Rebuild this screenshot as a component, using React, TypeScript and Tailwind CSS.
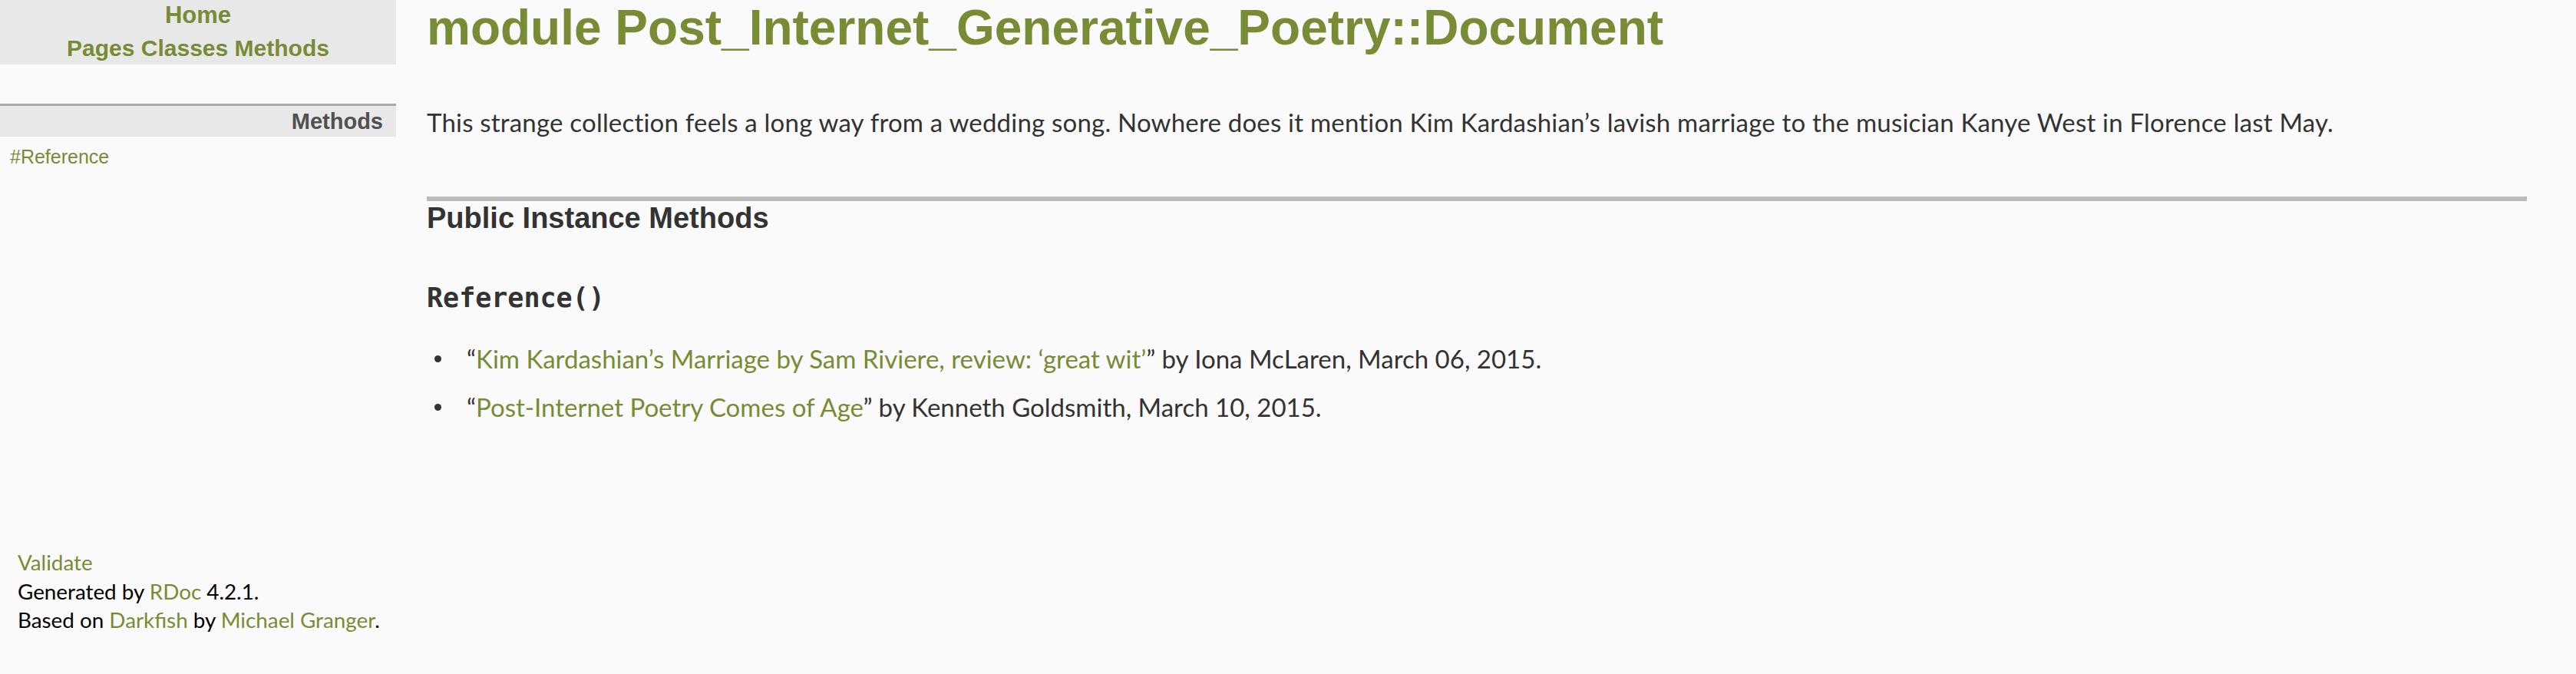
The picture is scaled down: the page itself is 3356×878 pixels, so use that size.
import React from "react";

const green = "text-[#778c35]";

export default function App() {
  return (
    <div className="flex min-h-screen w-full bg-[#fafafa] text-[#333]">
      {/* Sidebar */}
      <aside className="flex w-[516px] shrink-0 flex-col">
        <div className="bg-[#e8e8e8] pb-[1px] text-center font-['Liberation_Sans',Arial,sans-serif] font-bold">
          <div className={`text-[31px] leading-[39px] ${green}`}>Home</div>
          <div className={`mt-[4px] text-[30px] leading-[40px] ${green}`}>
            <span>Pages</span> <span>Classes</span> <span>Methods</span>
          </div>
        </div>

        <div className="mt-[51px] border-t-[3px] border-[#aaaaaa]">
          <h3 className="bg-[#e8e8e8] pr-[17px] text-right font-['Liberation_Sans',Arial,sans-serif] text-[29px] font-bold leading-[40px] text-[#505050]">
            Methods
          </h3>
          <div className={`mt-[10px] pl-[13px] font-['Liberation_Sans',Arial,sans-serif] text-[25px] leading-[32px] ${green}`}>
            #Reference
          </div>
        </div>

        <div className="mt-[494px] pl-[23px] font-['Lato',sans-serif] text-[27.8px] leading-[37.5px] text-black">
          <div className={green}>Validate</div>
          <div>
            Generated by <span className={green}>RDoc</span> 4.2.1.
          </div>
          <div>
            Based on <span className={green}>Darkfish</span> by{" "}
            <span className={green}>Michael Granger</span>.
          </div>
        </div>
      </aside>

      {/* Main */}
      <main className="ml-[40px] mr-[64px] flex-1">
        <h1 className={`font-['Liberation_Sans',Arial,sans-serif] text-[64px] font-bold leading-[72px] ${green}`}>
          module Post_Internet_Generative_Poetry::Document
        </h1>

        <p className="mt-[67px] font-['Lato',sans-serif] text-[33px] leading-[40px] tracking-[0.2px] text-[#333]">
          This strange collection feels a long way from a wedding song. Nowhere does it mention Kim Kardashian’s lavish
          marriage to the musician Kanye West in Florence last May.
        </p>

        <section className="mt-[77px] border-t-[6px] border-[#bbbbbb]">
          <h2 className="font-['Liberation_Sans',Arial,sans-serif] text-[38px] font-bold leading-[44px] text-[#333]">
            Public Instance Methods
          </h2>

          <div className="mt-[60px] font-['DejaVu_Sans_Mono',monospace] text-[35px] font-bold leading-[44px] text-[#333]">
            Reference()
          </div>

          <ul className="mt-[37px] flex flex-col gap-[23px] font-['Lato',sans-serif] text-[33px] leading-[40px] text-[#333]">
            <li className="flex items-center">
              <span className="ml-[10px] mr-[33px] h-[9px] w-[9px] shrink-0 rounded-full bg-[#333]" />
              <span>
                “<span className={green}>Kim Kardashian’s Marriage by Sam Riviere, review: ‘great wit’</span>” by Iona
                McLaren, March 06, 2015.
              </span>
            </li>
            <li className="flex items-center">
              <span className="ml-[10px] mr-[33px] h-[9px] w-[9px] shrink-0 rounded-full bg-[#333]" />
              <span>
                “<span className={green}>Post-Internet Poetry Comes of Age</span>” by Kenneth Goldsmith, March 10, 2015.
              </span>
            </li>
          </ul>
        </section>
      </main>
    </div>
  );
}
